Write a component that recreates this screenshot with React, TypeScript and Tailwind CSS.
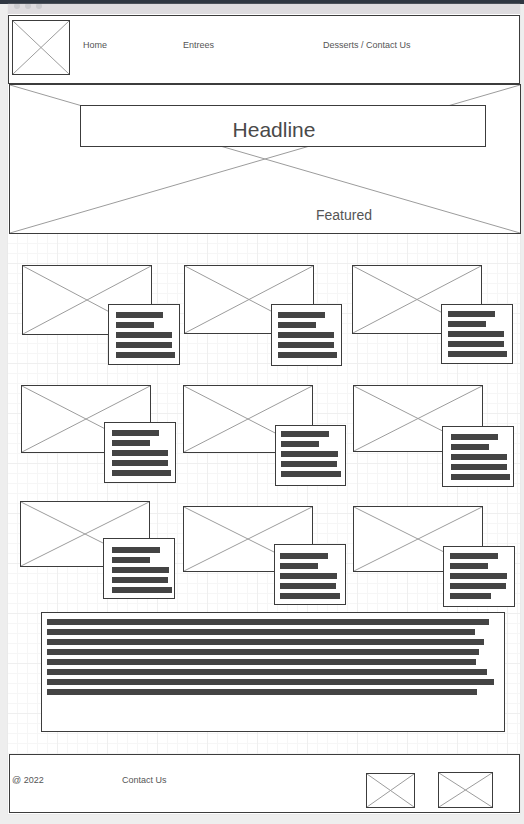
import React from "react";

function Placeholder({ label, className }: { label: string; className: string }) {
  return (
    <div role="img" aria-label={label} className={`border border-[#3c3c3c] bg-white ${className}`}>
      <svg className="block h-full w-full" viewBox="0 0 100 100" preserveAspectRatio="none" aria-hidden="true">
        <path d="M0 0L100 100M100 0L0 100" fill="none" stroke="#9c9c9c" strokeWidth="1" vectorEffect="non-scaling-stroke" />
      </svg>
    </div>
  );
}

function Bars({ widths }: { widths: string[] }) {
  return (
    <div className="flex flex-col gap-1">
      {widths.map((w, i) => (
        <div key={i} className={`h-1.5 bg-[#444] ${w}`} />
      ))}
    </div>
  );
}

const narrow = ["w-[47px]", "w-[38px]", "w-[56px]", "w-[56px]", "w-[59px]"];
const wide = ["w-[48px]", "w-[38px]", "w-[57px]", "w-[56px]", "w-[60px]"];
const short = ["w-[48px]", "w-[38px]", "w-[57px]", "w-[56px]", "w-[41px]"];

type Dish = { image: string; note: string; bars: string[] };

const rows: { layout: string; dishes: Dish[] }[] = [
  {
    layout: "h-[120px] pl-[14px] grid-cols-[162fr_168fr_168fr]",
    dishes: [
      { image: "h-[70px]", note: "left-[86px] top-[39px] h-[61px] w-[72px] pl-[7px] pt-[7px]", bars: narrow },
      { image: "h-[69px]", note: "left-[87px] top-[39px] h-[62px] w-[71px] pl-[6px] pt-[7px]", bars: narrow },
      { image: "h-[69px]", note: "left-[89px] top-[39px] h-[60px] w-[72px] pl-[6px] pt-[6px]", bars: narrow },
    ],
  },
  {
    layout: "h-[116px] pl-[13px] grid-cols-[162fr_170fr_167fr]",
    dishes: [
      { image: "h-[68px]", note: "left-[83px] top-[37px] h-[61px] w-[72px] pl-[7px] pt-[7px]", bars: narrow },
      { image: "h-[68px]", note: "left-[92px] top-[40px] h-[61px] w-[71px] pl-[5px] pt-[5px]", bars: wide },
      { image: "h-[67px]", note: "left-[89px] top-[41px] h-[61px] w-[72px] pl-[8px] pt-[7px]", bars: narrow },
    ],
  },
  {
    layout: "h-[111px] pl-[12px] grid-cols-[163fr_170fr_167fr] [&>*:not(:first-child)]:mt-[5px]",
    dishes: [
      { image: "h-[66px]", note: "left-[83px] top-[37px] h-[61px] w-[72px] pl-[8px] pt-[8px]", bars: wide },
      { image: "h-[66px]", note: "left-[91px] top-[38px] h-[61px] w-[72px] pl-[5px] pt-[8px]", bars: wide },
      { image: "h-[66px]", note: "left-[90px] top-[40px] h-[61px] w-[72px] pl-[6px] pt-[6px]", bars: short },
    ],
  },
];

const paragraph = [
  "w-[442px]",
  "w-[428px]",
  "w-[437px]",
  "w-[432px]",
  "w-[429px]",
  "w-[440px]",
  "w-[447px]",
  "w-[430px]",
];

const gridPaper =
  "bg-[linear-gradient(to_right,#efefef_1px,transparent_1px),linear-gradient(to_bottom,#efefef_1px,transparent_1px),linear-gradient(to_right,#f6f6f6_1px,transparent_1px),linear-gradient(to_bottom,#f6f6f6_1px,transparent_1px)] bg-[size:50px_50px,50px_50px,10px_10px,10px_10px] bg-[position:-1px_-21px,-1px_-21px,-1px_-1px,-1px_-1px]";

export default function App() {
  return (
    <div className="min-h-screen bg-[#eee] font-['Liberation_Sans',Arial,sans-serif] text-[#555]">
      <div className="h-1 bg-[#2f3742]" />
      <div className="ml-2 mr-1 bg-white pb-px shadow-[0_0_1px_#d4d4d4]">
        <div className="flex h-2.5 gap-[5px] overflow-hidden bg-[#dedcdf] pl-1.5">
          <span className="-mt-px size-1.5 rounded-full bg-[#cbcbcf]" />
          <span className="-mt-px size-1.5 rounded-full bg-[#cbcbcf]" />
          <span className="-mt-px size-1.5 rounded-full bg-[#cbcbcf]" />
        </div>

        <header className="mt-px flex h-[69px] border border-[#3c3c3c] bg-white pl-[3px] pt-1">
          <Placeholder label="Logo" className="h-[55px] w-[58px] shrink-0" />
          <nav className="ml-[13px] mt-5 grid flex-1 grid-cols-[100fr_140fr_196fr] text-[9px] leading-[10px]">
            <div><a href="#home">Home</a></div>
            <div><a href="#entrees">Entrees</a></div>
            <div><a href="#desserts">Desserts / Contact Us</a></div>
          </nav>
        </header>

        <section className="relative -mr-px ml-px h-[150px]">
          <Placeholder label="Featured picture" className="h-full w-full" />
          <div className="absolute left-[71px] right-[35px] top-[21px] h-[42px] border border-[#3c3c3c] bg-white pt-3">
            <h1 className="pr-[18px] text-center text-[21px] leading-6 text-[#4a4a4a]">Headline</h1>
          </div>
          <h2 className="absolute bottom-[11px] right-[149px] text-sm leading-4">Featured</h2>
        </section>

        <main className={`pb-[22px] pt-[31px] ${gridPaper}`}>
          {rows.map((row, r) => (
            <div key={r} className={`grid items-start ${row.layout}`}>
              {row.dishes.map((dish, d) => (
                <article key={d} className="relative">
                  <Placeholder label="Dish picture" className={`w-[130px] ${dish.image}`} />
                  <div className={`absolute border border-[#3c3c3c] bg-white ${dish.note}`}>
                    <Bars widths={dish.bars} />
                  </div>
                </article>
              ))}
            </div>
          ))}
          <section className="ml-[33px] mr-[15px] h-[120px] border border-[#3c3c3c] bg-white pl-[5px] pt-1.5">
            <Bars widths={paragraph} />
          </section>
        </main>

        <footer className="ml-px flex h-[59px] items-end border border-[#3c3c3c] bg-white pb-1 pl-0.5 pr-[26px] text-[9px] leading-[10px]">
          <p className="mb-[23px] w-[110px]">@ 2022</p>
          <a href="#contact" className="mb-[23px]">Contact Us</a>
          <Placeholder label="Social link one" className="ml-auto h-[35px] w-[49px]" />
          <Placeholder label="Social link two" className="ml-[23px] h-9 w-[55px]" />
        </footer>
      </div>
    </div>
  );
}
